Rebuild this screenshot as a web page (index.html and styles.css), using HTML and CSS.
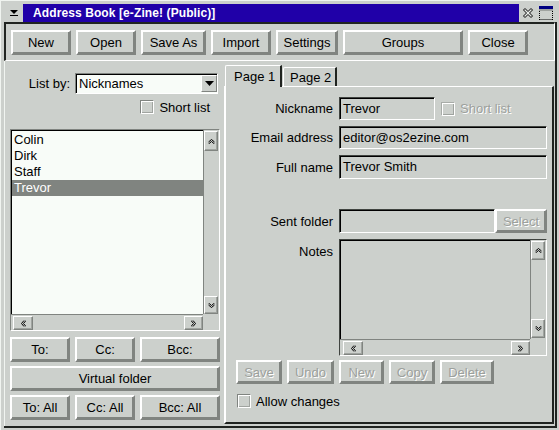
FILE: index.html
```html
<!DOCTYPE html>
<html lang="en">
<head>
    <meta charset="UTF-8">
    <title>Address Book [e-Zine! (Public)]</title>
    <link rel="stylesheet" href="styles.css">
</head>
<body>
    <div class="window">
        <!-- Title Bar -->
        <div class="titlebar">
            <div class="sysmenu">
                <svg width="8" height="6" viewBox="0 0 8 6"><polygon points="0,0 8,0 4,4" fill="#000"/><rect x="0" y="5" width="8" height="1" fill="#000"/></svg>
            </div>
            <div class="title">Address Book [e-Zine! (Public)]</div>
            <div class="title-icons">
                <svg width="12" height="12" viewBox="0 0 12 12"><path d="M1.5 3 L3 1.5 L6 4.5 L9 1.5 L10.5 3 L7.5 6 L10.5 9 L9 10.5 L6 7.5 L3 10.5 L1.5 9 L4.5 6 Z" fill="#e8ece8" stroke="#000" stroke-width="1"/></svg>
                <svg width="16" height="16" viewBox="0 0 16 16">
                    <rect x="1" y="1" width="14" height="3" fill="#000080"/>
                    <rect x="1" y="4" width="14" height="2" fill="#a0a4a0"/>
                    <path d="M1.5 6 V15 M14.5 6 V15 M1.5 14.5 H15" stroke="#000" stroke-dasharray="1 1" fill="none"/>
                </svg>
            </div>
        </div>

        <div class="frame">
            <!-- Toolbar -->
            <div class="toolbar">
                <button class="btn w60">New</button>
                <button class="btn w60">Open</button>
                <button class="btn w65">Save As</button>
                <button class="btn w60">Import</button>
                <button class="btn w62">Settings</button>
                <button class="btn w120">Groups</button>
                <button class="btn w60">Close</button>
            </div>

            <div class="main">
                <!-- Left Panel -->
                <div class="left">
                    <div class="listby">
                        <span>List by:</span>
                        <div class="combo">
                            <span class="combo-text">Nicknames</span>
                            <span class="combo-btn">
                                <svg width="9" height="5" viewBox="0 0 9 5"><polygon points="0,0 9,0 4.5,5" fill="#000"/></svg>
                            </span>
                        </div>
                    </div>
                    <div class="check short">
                        <span class="box"></span>
                        <span>Short list</span>
                    </div>

                    <div class="listbox">
                        <ul class="items">
                            <li>Colin</li>
                            <li>Dirk</li>
                            <li>Staff</li>
                            <li class="selected">Trevor</li>
                        </ul>
                        <div class="vscroll">
                            <span class="sbtn up"><svg width="7" height="5" viewBox="0 0 7 5"><path d="M0.5 3 L3.5 0.5 L6.5 3 M0.5 5 L3.5 2.5 L6.5 5" stroke="#000" fill="none"/></svg></span>
                            <span class="sbtn down"><svg width="7" height="5" viewBox="0 0 7 5"><path d="M0.5 0 L3.5 2.5 L6.5 0 M0.5 2 L3.5 4.5 L6.5 2" stroke="#000" fill="none"/></svg></span>
                        </div>
                        <div class="hscroll">
                            <span class="sbtn left-arrow"><svg width="5" height="7" viewBox="0 0 5 7"><path d="M3 0.5 L0.5 3.5 L3 6.5 M5 0.5 L2.5 3.5 L5 6.5" stroke="#000" fill="none"/></svg></span>
                            <span class="sbtn right-arrow"><svg width="5" height="7" viewBox="0 0 5 7"><path d="M0 0.5 L2.5 3.5 L0 6.5 M2 0.5 L4.5 3.5 L2 6.5" stroke="#000" fill="none"/></svg></span>
                        </div>
                        <div class="corner"></div>
                    </div>

                    <div class="btn-row">
                        <button class="btn w60">To:</button>
                        <button class="btn w60">Cc:</button>
                        <button class="btn w80">Bcc:</button>
                    </div>
                    <button class="btn wide">Virtual folder</button>
                    <div class="btn-row">
                        <button class="btn w60">To: All</button>
                        <button class="btn w60">Cc: All</button>
                        <button class="btn w80">Bcc: All</button>
                    </div>
                </div>

                <!-- Notebook -->
                <div class="notebook">
                    <div class="tabs">
                        <div class="tab active">Page 1</div>
                        <div class="tab">Page 2</div>
                    </div>
                    <div class="page">
                        <div class="form">
                            <span class="flabel">Nickname</span>
                            <div class="field-row">
                                <div class="field nick">Trevor</div>
                                <div class="check disabled">
                                    <span class="box"></span>
                                    <span>Short list</span>
                                </div>
                            </div>

                            <span class="flabel">Email address</span>
                            <div class="field">editor@os2ezine.com</div>

                            <span class="flabel">Full name</span>
                            <div class="field">Trevor Smith</div>

                            <div class="spacer"></div>

                            <span class="flabel">Sent folder</span>
                            <div class="field-row">
                                <div class="field sent"></div>
                                <button class="btn select" disabled>Select</button>
                            </div>

                            <span class="flabel top">Notes</span>
                            <div class="notes">
                                <div class="notes-text"></div>
                                <div class="vscroll">
                                    <span class="sbtn up"><svg width="7" height="5" viewBox="0 0 7 5"><path d="M0.5 3 L3.5 0.5 L6.5 3 M0.5 5 L3.5 2.5 L6.5 5" stroke="#000" fill="none"/></svg></span>
                                    <span class="sbtn down"><svg width="7" height="5" viewBox="0 0 7 5"><path d="M0.5 0 L3.5 2.5 L6.5 0 M0.5 2 L3.5 4.5 L6.5 2" stroke="#000" fill="none"/></svg></span>
                                </div>
                                <div class="hscroll">
                                    <span class="sbtn left-arrow"><svg width="5" height="7" viewBox="0 0 5 7"><path d="M3 0.5 L0.5 3.5 L3 6.5 M5 0.5 L2.5 3.5 L5 6.5" stroke="#000" fill="none"/></svg></span>
                                    <span class="sbtn right-arrow"><svg width="5" height="7" viewBox="0 0 5 7"><path d="M0 0.5 L2.5 3.5 L0 6.5 M2 0.5 L4.5 3.5 L2 6.5" stroke="#000" fill="none"/></svg></span>
                                </div>
                                <div class="corner"></div>
                            </div>
                        </div>

                        <div class="edit-row">
                            <button class="btn w46" disabled>Save</button>
                            <button class="btn w47" disabled>Undo</button>
                            <button class="btn w45" disabled>New</button>
                            <button class="btn w46" disabled>Copy</button>
                            <button class="btn w54" disabled>Delete</button>
                        </div>

                        <div class="check allow">
                            <span class="box"></span>
                            <span>Allow changes</span>
                        </div>
                    </div>
                </div>
            </div>
        </div>
    </div>
</body>
</html>
```

FILE: styles.css
```css
/* Global Styles */
* {
    box-sizing: border-box;
}

body {
    margin: 0;
    font-family: 'Liberation Sans', Arial, sans-serif;
    font-size: 13px;
    color: #000000;
    background-color: #ccd0cc;
}

.window {
    width: 559px;
    height: 430px;
    padding: 4px 2px 2px 4px;
    background-color: #ccd0cc;
    display: flex;
    flex-direction: column;
    overflow: hidden;
    box-shadow: inset 1px 1px #f0f4f0;
}

/* Title Bar */
.titlebar {
    display: flex;
    height: 18px;
    flex-shrink: 0;
}

.sysmenu {
    width: 19px;
    display: flex;
    align-items: center;
    justify-content: center;
}

.title {
    flex: 1;
    background-color: #2000a8;
    color: #ffffff;
    font-weight: bold;
    font-size: 12px;
    line-height: 18px;
    letter-spacing: 0.1px;
    padding-left: 10px;
    white-space: nowrap;
}

.title-icons {
    width: 38px;
    display: flex;
    align-items: center;
    gap: 4px;
    padding-left: 3px;
}

/* Frame */
.frame {
    flex: 1;
    display: flex;
    flex-direction: column;
    border-right: 2px solid #202420;
    border-bottom: 2px solid #202420;
}

.toolbar {
    display: flex;
    gap: 5px;
    height: 39px;
    flex-shrink: 0;
    padding: 6px 0 0 5px;
    border-style: solid;
    border-width: 2px 1px 1px 2px;
    border-color: #202420 #ffffff #ffffff #202420;
}

/* Buttons */
.btn {
    height: 25px;
    padding: 0;
    font-family: inherit;
    font-size: 13px;
    font-weight: normal;
    color: #000000;
    background-color: #ccd0cc;
    border: 2px solid;
    border-color: #ffffff #808480 #808480 #ffffff;
    box-shadow: inset -1px -1px #808480;
}

.btn:disabled {
    color: #9ca09c;
    text-shadow: 1px 1px #ffffff;
}

.w45 { width: 45px; }
.w46 { width: 46px; }
.w47 { width: 47px; }
.w54 { width: 54px; }
.w60 { width: 60px; }
.w62 { width: 62px; }
.w65 { width: 65px; }
.w80 { width: 80px; }
.w120 { width: 120px; }

.main {
    flex: 1;
    display: flex;
    border-left: 1px solid #f0f4f0;
}

/* Left Panel */
.left {
    width: 219px;
    display: flex;
    flex-direction: column;
    padding: 12px 4px 0 5px;
}

.listby {
    display: flex;
    justify-content: flex-end;
    align-items: center;
    gap: 5px;
    height: 21px;
    margin-right: 2px;
}

.combo {
    width: 143px;
    height: 21px;
    display: flex;
    background-color: #f8fcf8;
    border: 1px solid;
    border-color: #808480 #ffffff #ffffff #808480;
    box-shadow: inset 1px 1px #000000;
}

.combo-text {
    flex: 1;
    padding-left: 3px;
    line-height: 19px;
}

.combo-btn {
    width: 16px;
    margin: 1px 0 1px 0;
    display: flex;
    align-items: center;
    justify-content: center;
    background-color: #ccd0cc;
    border: 1px solid;
    border-color: #ffffff #808480 #808480 #ffffff;
}

/* Check boxes */
.check {
    display: flex;
    align-items: center;
    gap: 5px;
    height: 14px;
}

.check .box {
    width: 14px;
    height: 14px;
    background-color: #ccd0cc;
    border: 1px solid;
    border-color: #808480 #ffffff #ffffff #808480;
    box-shadow: inset 1px 1px #ffffff, inset -1px -1px #a0a4a0;
}

.check.short {
    justify-content: flex-end;
    margin-top: 6px;
    margin-right: 10px;
}

.check.disabled {
    color: #9ca09c;
    text-shadow: 1px 1px #ffffff;
    margin-left: 6px;
}

.check.disabled .box {
    border-color: #a8aca8 #ffffff #ffffff #a8aca8;
}

.check.allow {
    margin: 10px 0 0 11px;
}

/* List Box */
.listbox {
    width: 210px;
    height: 202px;
    margin-top: 15px;
    display: grid;
    grid-template-columns: 192px 16px;
    grid-template-rows: 184px 16px;
    border: 1px solid;
    border-color: #808480 #ffffff #ffffff #808480;
}

.items {
    list-style: none;
    margin: 0;
    padding: 1px 0 0 0;
    background-color: #f8fcf8;
    border-top: 1px solid #000000;
    border-left: 1px solid #000000;
}

.items li {
    height: 16px;
    line-height: 16px;
    padding-left: 2px;
}

.items li.selected {
    background-color: #808480;
    color: #ffffff;
}

.vscroll {
    display: flex;
    flex-direction: column;
    justify-content: space-between;
    border-left: 1px solid #808480;
}

.hscroll {
    display: flex;
    justify-content: space-between;
    border-top: 1px solid #808480;
    padding-left: 1px;
}

.corner {
    background-color: #ccd0cc;
}

.sbtn {
    display: flex;
    align-items: center;
    justify-content: center;
    background-color: #ccd0cc;
    border: 1px solid;
    border-color: #ffffff #808480 #808480 #ffffff;
    box-shadow: inset -1px -1px #a0a4a0;
}

.sbtn.up {
    width: 14px;
    height: 20px;
    margin-top: 1px;
}

.sbtn.down {
    width: 14px;
    height: 18px;
}

.sbtn.left-arrow {
    width: 20px;
    height: 14px;
    margin: 1px 0 0 1px;
}

.sbtn.right-arrow {
    width: 19px;
    height: 14px;
    margin-top: 1px;
}

.btn-row {
    display: flex;
    gap: 5px;
    margin-top: 6px;
}

.btn.wide {
    width: 210px;
    margin-top: 4px;
}

.left .btn-row + .btn.wide + .btn-row {
    margin-top: 4px;
}

/* Notebook */
.notebook {
    flex: 1;
    display: flex;
    flex-direction: column;
    margin-right: 1px;
}

.tabs {
    display: flex;
    align-items: flex-end;
    height: 25px;
    flex-shrink: 0;
    padding-left: 1px;
    z-index: 1;
}

.tab {
    height: 19px;
    width: 54px;
    margin-left: 1px;
    padding: 2px 0 0 6px;
    line-height: 16px;
    border-top: 1px solid #ffffff;
    border-left: 1px solid #ffffff;
    border-right: 2px solid #202420;
    border-top-left-radius: 2px;
    background-color: #ccd0cc;
}

.tab.active {
    width: 57px;
    height: 22px;
    margin-left: 0;
    margin-bottom: -1px;
    padding: 3px 0 0 8px;
}

.page {
    flex: 1;
    margin-bottom: 2px;
    border-style: solid;
    border-width: 1px 2px 2px 2px;
    border-color: #ffffff #202420 #202420 #ffffff;
}

.form {
    display: grid;
    grid-template-columns: 107px 208px;
    grid-template-rows: 23px 23px 24px 18px 24px 117px;
    column-gap: 6px;
    row-gap: 6px;
    padding-top: 10px;
}

.flabel {
    text-align: right;
    align-self: center;
    white-space: nowrap;
}

.flabel.top {
    align-self: start;
    padding-top: 5px;
}

.spacer {
    grid-column: 1 / -1;
}

.field-row {
    display: flex;
    align-items: center;
}

.field {
    height: 100%;
    padding-left: 3px;
    line-height: 21px;
    background-color: #ccd0cc;
    border: 1px solid;
    border-color: #404440 #ffffff #ffffff #404440;
    box-shadow: inset 1px 1px #000000;
    white-space: nowrap;
}

.field.nick {
    width: 96px;
}

.field.sent {
    width: 156px;
}

.btn.select {
    width: 52px;
    height: 24px;
}

.notes {
    display: grid;
    grid-template-columns: 190px 16px;
    grid-template-rows: 99px 16px;
    border: 1px solid;
    border-color: #404440 #ffffff #ffffff #404440;
}

.notes-text {
    border-top: 1px solid #000000;
    border-left: 1px solid #000000;
}

.notes .sbtn.up {
    height: 19px;
}

.notes .sbtn.down {
    height: 19px;
    margin-bottom: 1px;
}

.notes .sbtn.left-arrow {
    margin-left: 2px;
}

.edit-row {
    display: flex;
    gap: 5px;
    margin: 4px 0 0 10px;
}

.edit-row .btn {
    height: 24px;
}
```
